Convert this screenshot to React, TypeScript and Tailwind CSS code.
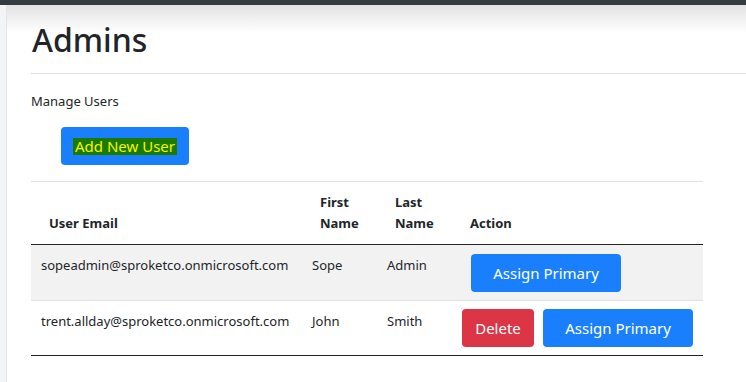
import React from "react";

const font = { fontFamily: '"Noto Sans", "Open Sans", sans-serif' };

export default function App() {
  return (
    <div className="w-[746px] h-[382px] overflow-hidden bg-white text-[#212529] flex flex-col" style={font}>
      <div className="h-[5px] bg-[#343a40] shrink-0" />
      <div className="flex flex-1">
        <div className="w-[7px] shrink-0 bg-[#f3f4f6] border-r border-[#e3e5e8]" />
        <div className="flex-1 bg-[linear-gradient(to_bottom,#e2e2e2,#ffffff_28px)] pl-[24px] pt-[15px]">
          <h1 className="text-[32px] leading-[40px] font-medium ml-[1px]">Admins</h1>
          <div className="mt-[13px] border-t border-[#dedede]" />
          <p className="mt-[18px] text-[13px] leading-[18px]">Manage Users</p>
          <div className="mt-[17px] ml-[30px]">
            <button className="w-[128px] h-[38px] rounded-[4px] bg-[#1a7ffd] flex items-center justify-center">
              <span className="bg-[#1b7a00] text-[#f4f400] text-[15px] leading-[17px] px-[2px]">Add New User</span>
            </button>
          </div>
          <table className="mt-[16px] w-[672px] table-fixed border-collapse text-[13px]">
            <colgroup>
              <col className="w-[271px]" />
              <col className="w-[75px]" />
              <col className="w-[75px]" />
              <col />
            </colgroup>
            <thead>
              <tr className="border-t border-[#dee2e6] border-b border-b-[#212529]">
                <th className="text-left align-bottom font-bold pl-[18px] pb-[10px] pt-[10px] leading-[21px]">User Email</th>
                <th className="text-left align-bottom font-bold pl-[18px] pb-[10px] pt-[10px] leading-[21px]">First<br />Name</th>
                <th className="text-left align-bottom font-bold pl-[18px] pb-[10px] pt-[10px] leading-[21px]">Last<br />Name</th>
                <th className="text-left align-bottom font-bold pl-[18px] pb-[10px] pt-[10px] leading-[21px]">Action</th>
              </tr>
            </thead>
            <tbody>
              <tr className="bg-[#f2f2f2] border-b border-[#dee2e6] h-[56px]">
                <td className="align-top pl-[10px] pt-[11px] leading-[18px] whitespace-nowrap">sopeadmin@sproketco.onmicrosoft.com</td>
                <td className="align-top pl-[10px] pt-[11px] leading-[18px]">Sope</td>
                <td className="align-top pl-[10px] pt-[11px] leading-[18px]">Admin</td>
                <td className="align-top pl-[19px] pt-[9px]">
                  <button className="w-[150px] h-[38px] rounded-[4px] bg-[#1a7ffd] text-white text-[15px]">Assign Primary</button>
                </td>
              </tr>
              <tr className="border-b border-[#212529] h-[55px]">
                <td className="align-top pl-[10px] pt-[11px] leading-[18px] whitespace-nowrap">trent.allday@sproketco.onmicrosoft.com</td>
                <td className="align-top pl-[10px] pt-[11px] leading-[18px]">John</td>
                <td className="align-top pl-[10px] pt-[11px] leading-[18px]">Smith</td>
                <td className="align-top pl-[10px] pt-[8px]">
                  <div className="flex gap-[9px]">
                    <button className="w-[72px] h-[38px] rounded-[4px] bg-[#dc3545] text-white text-[15px]">Delete</button>
                    <button className="w-[150px] h-[38px] rounded-[4px] bg-[#1a7ffd] text-white text-[15px]">Assign Primary</button>
                  </div>
                </td>
              </tr>
            </tbody>
          </table>
        </div>
      </div>
    </div>
  );
}
